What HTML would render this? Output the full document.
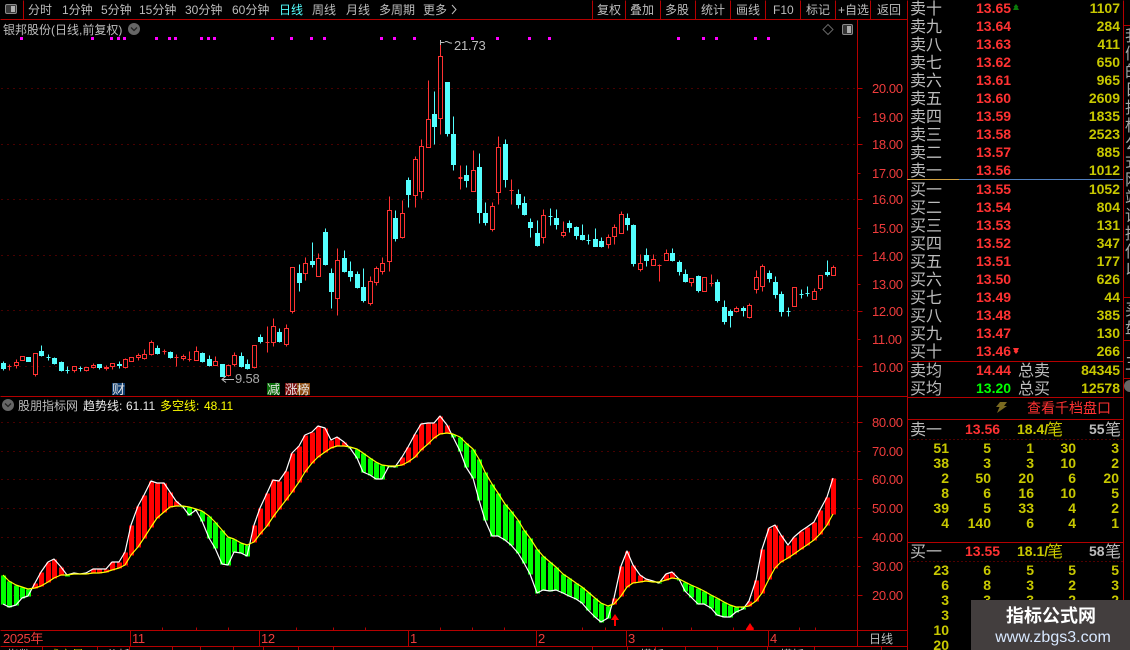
<!DOCTYPE html>
<html lang="zh">
<head>
<meta charset="utf-8">
<title>银邦股份</title>
<style>
html,body{margin:0;padding:0;background:#000;width:1130px;height:650px;overflow:hidden}
svg{display:block}
text{font-family:"Liberation Sans","WenQuanYi Zen Hei","Noto Sans CJK SC",sans-serif}
.m{font-size:12px;fill:#bdbdbd}
.ax{font-size:13px;fill:#f03c3c;letter-spacing:-.4px}
.lb{font-size:16px;fill:#bcbcbc}
.p{font-size:14px;font-weight:bold;fill:#ff3232}
.v{font-size:14px;font-weight:bold;fill:#c8c800;text-anchor:end}
.n{font-size:14px;font-weight:bold;fill:#c8c800;text-anchor:end}
</style>
</head>
<body>
<svg width="1130" height="650" viewBox="0 0 1130 650" xmlns="http://www.w3.org/2000/svg">
<rect width="1130" height="650" fill="#000"/>

<!-- grid -->
<g transform="translate(.5,.5)" shape-rendering="crispEdges" stroke="#900000" stroke-dasharray="1 5" fill="none">
<path d="M1 88H857M1 144H857M1 199H857M1 255H857M1 310H857M1 366H857"/>
<path d="M1 422H857M1 451H857M1 479H857M1 508H857M1 537H857M1 566H857M1 595H857"/>
</g>

<!-- magenta dots -->
<path fill="#ff00ff" shape-rendering="crispEdges" d="M20 37h3v3h-3zM91 37h3v3h-3zM110 37h3v3h-3zM117 37h3v3h-3zM123 37h3v3h-3zM155 37h3v3h-3zM168 37h3v3h-3zM174 37h3v3h-3zM200 37h3v3h-3zM207 37h3v3h-3zM213 37h3v3h-3zM271 37h3v3h-3zM290 37h3v3h-3zM310 37h3v3h-3zM323 37h3v3h-3zM380 37h3v3h-3zM393 37h3v3h-3zM413 37h3v3h-3zM471 37h3v3h-3zM496 37h3v3h-3zM528 37h3v3h-3zM548 37h3v3h-3zM677 37h3v3h-3zM702 37h3v3h-3zM715 37h3v3h-3zM754 37h3v3h-3zM767 37h3v3h-3z"/>

<!-- candles -->
<g transform="translate(.5,.5)" shape-rendering="crispEdges">
<path fill="none" stroke="#ff3232" d="M9 364V370M7 366h4M16 359V362M16 365V368M14 362h4V365h-4zM20 356h4V360h-4zM35 374V376M33 353h4V374h-4zM74 370V372M72 366h4V370h-4zM86 370V371M84 367h4V370h-4zM93 363V365M93 367V368M91 365h4V367h-4zM106 365V370M104 367h4V368h-4zM112 366V369M110 363h4V366h-4zM125 358V359M125 367V368M123 359h4V367h-4zM129 357h4V361h-4zM138 353V355M138 357V360M136 355h4V357h-4zM144 349V354M144 358V359M142 354h4V358h-4zM151 340V342M151 354V355M149 342h4V354h-4zM164 349V354M162 351h4M176 354V366M174 357h4M183 354V356M183 358V360M181 356h4V358h-4zM189 351V361M187 359h4M196 346V351M194 351h4V360h-4zM215 356V361M213 361h4V365h-4zM228 364V365M228 375V376M226 365h4V375h-4zM234 352V355M234 364V366M232 355h4V364h-4zM252 345h4V367h-4zM254 367V368M267 326V352M265 342h4M273 318V326M273 342V346M271 326h4V342h-4zM286 324V328M286 344V346M284 328h4V344h-4zM292 311V313M290 267h4V311h-4zM305 257V263M305 273V280M303 263h4V273h-4zM318 253V258M316 258h4V276h-4zM337 248V260M337 298V315M335 260h4V298h-4zM370 276V281M370 303V305M368 281h4V303h-4zM376 266V268M376 282V285M374 268h4V282h-4zM382 257V263M382 271V274M380 263h4V271h-4zM389 196V210M389 261V271M387 210h4V261h-4zM402 200V213M402 237V238M400 213h4V237h-4zM415 156V159M415 195V207M413 159h4V195h-4zM421 139V146M421 191V198M419 146h4V191h-4zM428 80V119M426 119h4V147h-4zM440 43V56M440 118V134M438 56h4V118h-4zM460 165V189M458 177h4M458 178h4M473 150V170M471 170h4V191h-4zM492 202V206M492 229V231M490 206h4V229h-4zM498 136V147M498 192V204M496 147h4V192h-4zM511 179V204M509 190h4M543 209V215M543 237V243M541 215h4V237h-4zM563 221V232M563 235V237M561 232h4V235h-4zM608 234V237M608 244V248M606 237h4V244h-4zM614 224V227M614 236V244M612 227h4V236h-4zM621 211V214M619 214h4V233h-4zM640 254V263M640 269V271M638 263h4V269h-4zM653 254V259M651 259h4V265h-4zM659 264V281M657 265h4M666 249V253M664 253h4V260h-4zM691 282V286M689 278h4V282h-4zM702 277h4V291h-4zM711 274V286M709 283h4M736 306V308M736 311V312M734 308h4V311h-4zM749 303V305M749 317V318M747 305h4V317h-4zM756 270V277M756 289V293M754 277h4V289h-4zM762 264V266M762 286V291M760 266h4V286h-4zM792 287h4V306h-4zM814 288V291M812 291h4V299h-4zM818 275h4V288h-4zM820 288V290M833 265V267M831 267h4V275h-4z"/>
<path fill="#54ffff" stroke="#54ffff" d="M3 361V370M1 363h4V368h-4zM26 357h4V361h-4zM41 345V356M39 351h4V355h-4zM48 354V360M46 357h4M54 357V364M52 358h4V363h-4zM61 361V371M59 362h4V370h-4zM67 366V373M65 370h4M80 366V371M78 368h4M99 364V369M97 364h4V367h-4zM119 361V368M117 364h4V365h-4zM157 345V354M155 348h4V353h-4zM170 351V358M168 352h4V357h-4zM202 352V362M200 353h4V361h-4zM209 355V366M207 359h4V365h-4zM220 364h4V376h-4zM241 352V367M239 356h4V366h-4zM247 359V369M245 364h4V368h-4zM260 334V343M258 337h4V341h-4zM279 328V342M277 332h4V341h-4zM299 264V291M297 273h4V282h-4zM312 242V267M310 261h4V264h-4zM325 228V265M323 232h4V264h-4zM331 268V308M329 273h4V291h-4zM344 250V272M342 258h4V271h-4zM350 261V281M348 271h4V276h-4zM357 271V288M355 274h4V287h-4zM363 268V302M361 287h4V300h-4zM395 210V241M393 218h4V238h-4zM408 177V207M406 180h4V194h-4zM434 91V144M432 114h4V126h-4zM447 82V136M445 82h4V133h-4zM453 116V170M451 134h4V164h-4zM466 165V187M464 175h4V180h-4zM479 153V223M477 167h4V212h-4zM485 202V225M483 213h4V222h-4zM505 139V187M503 144h4V179h-4zM518 189V208M516 194h4V204h-4zM524 196V215M522 203h4V214h-4zM530 218V237M528 222h4V227h-4zM537 220V246M535 233h4V245h-4zM550 208V225M548 216h4M556 209V229M554 218h4V224h-4zM569 220V232M567 223h4V227h-4zM576 226V239M574 227h4V235h-4zM582 224V240M580 235h4V239h-4zM588 234V244M586 240h4M595 228V246M593 239h4V246h-4zM601 237V247M599 241h4V246h-4zM627 213V230M625 218h4V224h-4zM633 224V266M631 225h4V263h-4zM646 248V266M644 255h4V260h-4zM672 248V261M670 253h4V260h-4zM679 260V275M677 262h4V271h-4zM685 269V282M683 274h4V281h-4zM698 275V292M696 276h4V290h-4zM717 279V302M715 282h4V300h-4zM724 300V324M722 307h4V321h-4zM730 309V327M728 311h4V315h-4zM743 306V316M741 308h4V310h-4zM769 270V282M767 273h4V278h-4zM775 276V298M773 282h4V294h-4zM781 291V316M779 294h4V311h-4zM788 307V316M786 311h4M801 289V298M799 294h4M807 286V296M805 293h4M827 260V276M825 272h4V274h-4z"/>
</g>

<!-- high / low annotations -->
<g fill="none" stroke="#bdbdbd">
<path d="M440.5 42.5h4M440.5 40v5M445 42c2-2 4 2 7 1"/>
<path d="M234 379.500H222M226 376l-4 3.500 4 3"/>
</g>
<text x="454" y="50" style="font-size:13px;fill:#bdbdbd;letter-spacing:-.2px">21.73</text>
<text x="235" y="383" style="font-size:13px;fill:#a8a8a8;letter-spacing:-.2px">9.58</text>

<!-- event badges -->
<rect x="112" y="383" width="13" height="12" fill="#0f3c6e"/>
<text x="112" y="394" style="font-size:13px;fill:#e0e0e0">财</text>
<rect x="267" y="383" width="13" height="12" fill="#0a6e0a"/>
<text x="267" y="394" style="font-size:13px;fill:#e0e0e0">减</text>
<rect x="285" y="383" width="12" height="12" fill="#7a1010"/>
<text x="285" y="394" style="font-size:12.500px;fill:#e8e8e8">涨</text>
<rect x="297" y="383" width="13" height="12" fill="#8a4a10"/>
<text x="297" y="394" style="font-size:12.500px;fill:#e8e8e8">榜</text>

<!-- indicator bars -->
<g transform="translate(.5,.5)" shape-rendering="crispEdges" stroke-width="5" fill="none">
<path stroke="#ff0000" d="M35 583V588M41 572V586M48 562V582M54 559V578M61 567V575M74 573V574M86 573V574M93 569V573M99 569V573M106 569V572M112 562V570M119 562V568M125 552V565M131 525V555M138 506V547M144 495V538M151 481V527M157 483V518M164 483V512M170 492V507M176 501V506M254 525V542M260 508V534M267 493V526M273 480V517M279 481V509M286 471V500M292 453V492M299 446V482M305 435V472M312 432V463M318 426V457M325 428V452M331 440V448M337 437V446M344 442V446M402 457V465M408 447V462M415 434V457M421 424V450M428 423V444M434 423V438M440 416V434M447 425V433M614 598V604M621 566V596M627 551V587M633 565V583M640 575V582M646 579V581M653 581V582M666 574V580M672 572V578M749 601V606M756 580V601M762 549V593M769 528V579M775 525V568M781 535V562M788 545V558M794 537V554M801 531V549M807 527V545M814 522V540M820 510V534M827 497V525M833 478V514"/>
<path stroke="#00ff00" d="M3 575V604M9 581V607M16 585V605M22 587V598M28 589V596M67 575V576M183 506V507M189 507V515M196 509V510M202 511V521M209 516V538M215 522V548M222 530V564M228 537V565M234 539V552M241 543V553M247 545V556M350 447V448M357 449V458M363 453V472M370 458V475M376 462V479M382 465V479M389 466V467M395 466V467M453 434V437M460 437V451M466 443V467M473 449V478M479 459V500M485 472V520M492 484V536M498 493V536M505 504V540M511 511V545M518 520V553M524 530V563M530 538V574M537 549V593M543 556V590M550 562V591M556 567V590M563 574V593M569 578V596M576 583V599M582 587V603M588 592V610M595 598V617M601 603V622M608 606V618M659 582V583M679 579V580M685 582V591M691 585V597M698 588V604M704 591V604M711 595V608M717 598V615M724 602V617M730 605V617M736 607V612M743 607V609"/>
</g>
<g fill="none" stroke-width="1.200" stroke-linejoin="round">
<polyline stroke="#ffffff" points="3,604 9,607 16,605 22,598 28,596 35,583 41,572 48,562 54,559 61,567 67,575 74,573 80,574 86,573 93,569 99,569 106,569 112,562 119,562 125,552 131,525 138,506 144,495 151,481 157,483 164,483 170,492 176,501 183,507 189,515 196,510 202,521 209,538 215,548 222,564 228,565 234,552 241,553 247,556 254,525 260,508 267,493 273,480 279,481 286,471 292,453 299,446 305,435 312,432 318,426 325,428 331,440 337,437 344,442 350,448 357,458 363,472 370,475 376,479 382,479 389,466 395,467 402,457 408,447 415,434 421,424 428,423 434,423 440,416 447,425 453,437 460,451 466,467 473,478 479,500 485,520 492,536 498,536 505,540 511,545 518,553 524,563 530,574 537,593 543,590 550,591 556,590 563,593 569,596 576,599 582,603 588,610 595,617 601,622 608,618 614,598 621,566 627,551 633,565 640,575 646,579 653,581 659,583 666,574 672,572 679,579 685,591 691,597 698,604 704,604 711,608 717,615 724,617 730,617 736,612 743,609 749,601 756,580 762,549 769,528 775,525 781,535 788,545 794,537 801,531 807,527 814,522 820,510 827,497 833,478"/>
<polyline stroke="#ffff00" points="3,575 9,581 16,585 22,587 28,589 35,588 41,586 48,582 54,578 61,575 67,575 74,574 80,574 86,574 93,573 99,573 106,572 112,570 119,568 125,565 131,555 138,547 144,538 151,527 157,518 164,512 170,507 176,506 183,506 189,507 196,509 202,511 209,516 215,522 222,530 228,537 234,539 241,543 247,545 254,542 260,534 267,526 273,517 279,509 286,500 292,492 299,482 305,472 312,463 318,457 325,452 331,448 337,446 344,446 350,447 357,449 363,453 370,458 376,462 382,465 389,466 395,466 402,465 408,462 415,457 421,450 428,444 434,438 440,434 447,433 453,434 460,437 466,443 473,449 479,459 485,472 492,484 498,493 505,504 511,511 518,520 524,530 530,538 537,549 543,556 550,562 556,567 563,574 569,578 576,583 582,587 588,592 595,598 601,603 608,606 614,604 621,596 627,587 633,583 640,582 646,581 653,582 659,582 666,580 672,578 679,579 685,582 691,585 698,588 704,591 711,595 717,598 724,602 730,605 736,607 743,607 749,606 756,601 762,593 769,579 775,568 781,562 788,558 794,554 801,549 807,545 814,540 820,534 827,525 833,514"/>
</g>

<!-- signal arrows -->
<path fill="#ff0000" d="M615 614l4 6h-3v6h-2v-6h-3zM750 623l4 6v1h-8v-1z"/>

<!-- frame lines -->
<g transform="translate(.5,.5)" shape-rendering="crispEdges" stroke="#b40000" fill="none">
<path d="M0 19H907M23 0V19M592 0V19M625 0V19M660 0V19M695 0V19M730 0V19M765 0V19M800 0V19M835 0V19M870 0V19"/>
<path d="M0 396H907M0 630H907M0 646H907M857 19V646M907 0V650M1123 0V650"/>
<path d="M130 630V646M259 630V646M408 630V646M536 630V646M626 630V646M768 630V646"/>
<path d="M162 627V630M196 627V630M228 627V630M296 627V630M333 627V630M365 627V630M440 627V630M472 627V630M504 627V630M582 627V630M605 627V630M662 627V630M691 627V630M733 627V630M753 627V630M799 627V630M815 627V630"/>
<path d="M42 646V650M97 646V650M129 646V650M172 646V650M200 646V650M233 646V650M263 646V650M298 646V650M333 646V650M592 646V650M627 646V650M655 646V650M685 646V650M717 646V650M767 646V650M814 646V650M881 646V650"/>
<path d="M857 88H862M857 117H860M857 144H862M857 173H860M857 199H862M857 228H860M857 255H862M857 284H860M857 311H862M857 339H860M857 366H862"/>
<path d="M857 422H862M857 451H860M857 479H862M857 508H860M857 537H862M857 566H860M857 595H862"/>
<path d="M907 361H1123M907 397H1123M907 419H1123M907 542H1123M1123 25H1130M1123 297H1130M1123 340H1130M1123 378H1130"/>
<path stroke="#a00000" stroke-dasharray="1 3" d="M909 439H1122M909 561H1122"/>
</g>
<rect x="907" y="179" width="52" height="1" fill="#d0a040"/>
<rect x="959" y="179" width="164" height="1" fill="#5080c0"/>

<!-- toolbar -->
<rect x="5.500" y="4.500" width="11" height="9" rx="1.500" fill="#3a3a3a" stroke="#8c8c8c"/>
<rect x="11" y="6" width="4" height="6" fill="#b0b0b0"/>
<text x="28" y="14" class="m">分时</text>
<text x="62" y="14" class="m">1分钟</text>
<text x="101" y="14" class="m">5分钟</text>
<text x="139" y="14" class="m">15分钟</text>
<text x="185" y="14" class="m">30分钟</text>
<text x="232" y="14" class="m">60分钟</text>
<text x="279" y="14" class="m" style="fill:#54ffff">日线</text>
<text x="312" y="14" class="m">周线</text>
<text x="346" y="14" class="m">月线</text>
<text x="379" y="14" class="m">多周期</text>
<text x="423" y="14" class="m">更多</text>
<path d="M452 5l4 4.500-4 4.500" fill="none" stroke="#bdbdbd"/>
<text x="597" y="14" class="m">复权</text>
<text x="630" y="14" class="m">叠加</text>
<text x="665" y="14" class="m">多股</text>
<text x="701" y="14" class="m">统计</text>
<text x="736" y="14" class="m">画线</text>
<text x="773" y="14" class="m">F10</text>
<text x="806" y="14" class="m">标记</text>
<text x="838" y="14" class="m">+自选</text>
<text x="877" y="14" class="m">返回</text>

<!-- stock title -->
<text x="3" y="34" class="m">银邦股份(日线,前复权)</text>
<circle cx="134" cy="29" r="6" fill="#666"/>
<path d="M131 27.500l3 3 3-3" fill="none" stroke="#222" stroke-width="1.300"/>
<path d="M828 24.500l5 5-5 5-5-5z" fill="none" stroke="#666"/>
<rect x="842.500" y="24.500" width="10" height="10" rx="1.500" fill="#333" stroke="#888"/>
<rect x="847" y="26" width="4" height="7" fill="#aaa"/>

<!-- indicator title -->
<circle cx="8" cy="405" r="6" fill="#666"/>
<path d="M5 403.500l3 3 3-3" fill="none" stroke="#222" stroke-width="1.300"/>
<text x="18" y="410" class="m">股朋指标网</text>
<text x="83" y="410" class="m" style="fill:#e8e8e8">趋势线:</text>
<text x="126" y="410" class="m" style="fill:#e8e8e8">61.11</text>
<text x="160" y="410" class="m" style="fill:#ffff00">多空线:</text>
<text x="204" y="410" class="m" style="fill:#ffff00">48.11</text>

<!-- price axis -->
<text x="872" y="93" class="ax">20.00</text>
<text x="872" y="122" class="ax">19.00</text>
<text x="872" y="149" class="ax">18.00</text>
<text x="872" y="178" class="ax">17.00</text>
<text x="872" y="204" class="ax">16.00</text>
<text x="872" y="233" class="ax">15.00</text>
<text x="872" y="261" class="ax">14.00</text>
<text x="872" y="289" class="ax">13.00</text>
<text x="872" y="316" class="ax">12.00</text>
<text x="872" y="344" class="ax">11.00</text>
<text x="872" y="372" class="ax">10.00</text>
<text x="872" y="427" class="ax">80.00</text>
<text x="872" y="456" class="ax">70.00</text>
<text x="872" y="484" class="ax">60.00</text>
<text x="872" y="513" class="ax">50.00</text>
<text x="872" y="542" class="ax">40.00</text>
<text x="872" y="571" class="ax">30.00</text>
<text x="872" y="600" class="ax">20.00</text>

<!-- date axis -->
<text x="3" y="643" class="ax">2025年</text>
<text x="132" y="643" class="ax">11</text>
<text x="261" y="643" class="ax">12</text>
<text x="410" y="643" class="ax">1</text>
<text x="538" y="643" class="ax">2</text>
<text x="628" y="643" class="ax">3</text>
<text x="770" y="643" class="ax">4</text>
<text x="869" y="643" class="m">日线</text>

<!-- bottom clipped labels -->
<text x="7" y="659" class="m">指数</text>
<text x="48" y="659" class="m" style="fill:#c8c800">成交量</text>
<text x="106" y="659" class="m">分析</text>
<text x="640" y="659" class="m">模板</text>
<text x="780" y="659" class="m">模板</text>

<!-- order book sell -->
<text x="910" y="14" class="lb">卖十</text><text x="976" y="13" class="p">13.65</text><text x="1120" y="13" class="v">1107</text>
<text x="910" y="32" class="lb">卖九</text><text x="976" y="31" class="p">13.64</text><text x="1120" y="31" class="v">284</text>
<text x="910" y="50" class="lb">卖八</text><text x="976" y="49" class="p">13.63</text><text x="1120" y="49" class="v">411</text>
<text x="910" y="68" class="lb">卖七</text><text x="976" y="67" class="p">13.62</text><text x="1120" y="67" class="v">650</text>
<text x="910" y="86" class="lb">卖六</text><text x="976" y="85" class="p">13.61</text><text x="1120" y="85" class="v">965</text>
<text x="910" y="104" class="lb">卖五</text><text x="976" y="103" class="p">13.60</text><text x="1120" y="103" class="v">2609</text>
<text x="910" y="122" class="lb">卖四</text><text x="976" y="121" class="p">13.59</text><text x="1120" y="121" class="v">1835</text>
<text x="910" y="140" class="lb">卖三</text><text x="976" y="139" class="p">13.58</text><text x="1120" y="139" class="v">2523</text>
<text x="910" y="158" class="lb">卖二</text><text x="976" y="157" class="p">13.57</text><text x="1120" y="157" class="v">885</text>
<text x="910" y="176" class="lb">卖一</text><text x="976" y="175" class="p">13.56</text><text x="1120" y="175" class="v">1012</text>
<path d="M1016 4l2.500 3h-1l1.500 3h-6l1.500-3h-1z" fill="#0a7a0a"/>

<!-- order book buy -->
<text x="910" y="195" class="lb">买一</text><text x="976" y="194" class="p">13.55</text><text x="1120" y="194" class="v">1052</text>
<text x="910" y="213" class="lb">买二</text><text x="976" y="212" class="p">13.54</text><text x="1120" y="212" class="v">804</text>
<text x="910" y="231" class="lb">买三</text><text x="976" y="230" class="p">13.53</text><text x="1120" y="230" class="v">131</text>
<text x="910" y="249" class="lb">买四</text><text x="976" y="248" class="p">13.52</text><text x="1120" y="248" class="v">347</text>
<text x="910" y="267" class="lb">买五</text><text x="976" y="266" class="p">13.51</text><text x="1120" y="266" class="v">177</text>
<text x="910" y="285" class="lb">买六</text><text x="976" y="284" class="p">13.50</text><text x="1120" y="284" class="v">626</text>
<text x="910" y="303" class="lb">买七</text><text x="976" y="302" class="p">13.49</text><text x="1120" y="302" class="v">44</text>
<text x="910" y="321" class="lb">买八</text><text x="976" y="320" class="p">13.48</text><text x="1120" y="320" class="v">385</text>
<text x="910" y="339" class="lb">买九</text><text x="976" y="338" class="p">13.47</text><text x="1120" y="338" class="v">130</text>
<text x="910" y="357" class="lb">买十</text><text x="976" y="356" class="p">13.46</text><text x="1120" y="356" class="v">266</text>
<path d="M1016 354l-2.500-3h1l-1.500-3h6l-1.500 3h1z" fill="#ff3232"/>

<!-- averages -->
<text x="910" y="376" class="lb">卖均</text><text x="976" y="375" class="p">14.44</text>
<text x="1018" y="376" class="lb">总卖</text><text x="1120" y="375" class="v">84345</text>
<text x="910" y="394" class="lb">买均</text><text x="976" y="393" class="p" style="fill:#00ff00">13.20</text>
<text x="1018" y="394" class="lb">总买</text><text x="1120" y="393" class="v">12578</text>

<!-- thousand level -->
<path d="M1000 402h7l-3 4h3l-10 7 2.500-6H996z" fill="#7a6a20"/>
<text x="1027" y="413" style="font-size:14px;fill:#ff3232">查看千档盘口</text>

<!-- tick summary -->
<text x="910" y="435" class="lb">卖一</text>
<text x="965" y="434" class="p">13.56</text>
<text x="1017" y="434" class="p" style="fill:#c8c800">18.4/</text><text x="1047" y="435" class="lb" style="fill:#c8c800">笔</text>
<text x="1089" y="434" class="p" style="fill:#bdbdbd">55</text><text x="1105" y="435" class="lb">笔</text>

<text x="949" y="453" class="n">51</text><text x="991" y="453" class="n">5</text><text x="1034" y="453" class="n">1</text><text x="1076" y="453" class="n">30</text><text x="1119" y="453" class="n">3</text>
<text x="949" y="468" class="n">38</text><text x="991" y="468" class="n">3</text><text x="1034" y="468" class="n">3</text><text x="1076" y="468" class="n">10</text><text x="1119" y="468" class="n">2</text>
<text x="949" y="483" class="n">2</text><text x="991" y="483" class="n">50</text><text x="1034" y="483" class="n">20</text><text x="1076" y="483" class="n">6</text><text x="1119" y="483" class="n">20</text>
<text x="949" y="498" class="n">8</text><text x="991" y="498" class="n">6</text><text x="1034" y="498" class="n">16</text><text x="1076" y="498" class="n">10</text><text x="1119" y="498" class="n">5</text>
<text x="949" y="513" class="n">39</text><text x="991" y="513" class="n">5</text><text x="1034" y="513" class="n">33</text><text x="1076" y="513" class="n">4</text><text x="1119" y="513" class="n">2</text>
<text x="949" y="528" class="n">4</text><text x="991" y="528" class="n">140</text><text x="1034" y="528" class="n">6</text><text x="1076" y="528" class="n">4</text><text x="1119" y="528" class="n">1</text>

<text x="910" y="557" class="lb">买一</text>
<text x="965" y="556" class="p">13.55</text>
<text x="1017" y="556" class="p" style="fill:#c8c800">18.1/</text><text x="1047" y="557" class="lb" style="fill:#c8c800">笔</text>
<text x="1089" y="556" class="p" style="fill:#bdbdbd">58</text><text x="1105" y="557" class="lb">笔</text>

<text x="949" y="575" class="n">23</text><text x="991" y="575" class="n">6</text><text x="1034" y="575" class="n">5</text><text x="1076" y="575" class="n">5</text><text x="1119" y="575" class="n">5</text>
<text x="949" y="590" class="n">6</text><text x="991" y="590" class="n">8</text><text x="1034" y="590" class="n">3</text><text x="1076" y="590" class="n">2</text><text x="1119" y="590" class="n">3</text>
<text x="949" y="605" class="n">3</text><text x="991" y="605" class="n">3</text><text x="1034" y="605" class="n">3</text><text x="1076" y="605" class="n">2</text><text x="1119" y="605" class="n">2</text>
<text x="949" y="620" class="n">3</text>
<text x="949" y="635" class="n">10</text>
<text x="949" y="650" class="n">20</text>

<!-- right edge clipped column -->
<g style="font-size:16px;fill:#a8a8a8">
<text x="1125" y="41">我</text><text x="1125" y="59">们</text><text x="1125" y="77">的</text><text x="1125" y="95">日</text><text x="1125" y="113">指</text><text x="1125" y="131">标</text><text x="1125" y="149">公</text><text x="1125" y="167">式</text><text x="1125" y="185">网</text><text x="1125" y="203">站</text><text x="1125" y="221">请</text><text x="1125" y="239">提</text><text x="1125" y="257">供</text><text x="1125" y="275">以</text><text x="1125" y="315">买</text><text x="1125" y="333">盘</text><text x="1125" y="369">五</text>
</g>
<circle cx="1130" cy="386" r="6" fill="#666"/>

<!-- watermark -->
<rect x="971" y="600" width="159" height="50" fill="#433e3e"/>
<text x="1051" y="622" text-anchor="middle" style="font-size:18px;font-weight:bold;fill:#ffffff;font-family:'Liberation Sans','Noto Sans CJK SC',sans-serif">指标公式网</text>
<text x="1053" y="642" text-anchor="middle" style="font-size:16px;fill:#d8e8ff">www.zbgs3.com</text>
</svg>
</body>
</html>
